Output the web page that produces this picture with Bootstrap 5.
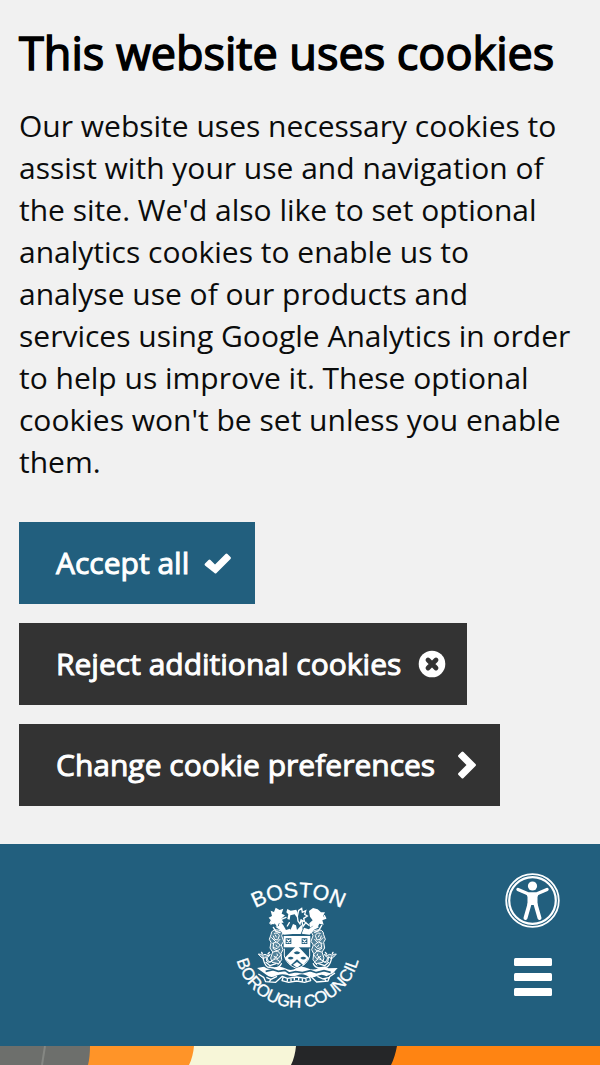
<!DOCTYPE html>
<html lang="en">
<head>
<meta charset="utf-8">
<meta name="viewport" content="width=device-width, initial-scale=1">
<title>Boston Borough Council</title>
<link rel="stylesheet" href="https://cdn.jsdelivr.net/npm/bootstrap@5.3.0/dist/css/bootstrap.min.css">
<style>
  body { font-family: "Open Sans", "Noto Sans", sans-serif; font-size: 30px; line-height: 42px; color: #0b0c0c; background: #f1f1f1; }
  .cookie-banner { padding: 20px 19px 38px; }
  .cookie-title { font-size: 45px; line-height: 66px; font-weight: 400; color: #000; margin-bottom: 19px; -webkit-text-stroke: 1.5px currentColor; }
  .cookie-copy { margin-bottom: 39px; }
  .cookie-btn { --bs-btn-color: #fff; --bs-btn-hover-color: #fff; --bs-btn-bg: #333; --bs-btn-hover-bg: #111; --bs-btn-active-color: #fff; --bs-btn-active-bg: #111;
    --bs-btn-font-size: 30px; --bs-btn-line-height: 42px; --bs-btn-padding-x: 37px; --bs-btn-padding-y: 20px; --bs-btn-border-width: 0; --bs-btn-border-radius: 0; -webkit-text-stroke: 1px currentColor; }
  .cookie-btn svg { stroke: none; flex: none; }
  .accept { --bs-btn-bg: #225f7e; --bs-btn-hover-bg: #184a63; gap: 15px; padding-right: 23px; }
  .reject { gap: 17px; padding-right: 21px; }
  .change { gap: 22px; padding-right: 23px; }
  .btn-stack { gap: 19px; }
  .site-header { background: #225f7e; padding: 26px 40px 26px 35px; }
  .header-side { flex: 1 1 0; }
  .tools { gap: 30px; padding-top: 3px; }
  .tool-btn { --bs-btn-padding-x: 0; --bs-btn-padding-y: 0; --bs-btn-border-width: 0; line-height: 0; }
  .crest-text { font-family: "Liberation Sans", sans-serif; fill: #fff; stroke: #fff; stroke-width: 1; }
  .hero { height: 19px; }
</style>
</head>
<body>
<section class="cookie-banner" aria-labelledby="cookie-title">
  <h2 class="cookie-title" id="cookie-title">This website uses cookies</h2>
  <p class="cookie-copy">Our website uses necessary cookies to assist with your use and navigation of the site. We'd also like to set optional analytics cookies to enable us to analyse use of our products and services using Google Analytics in order to help us improve it. These optional cookies won't be set unless you enable them.</p>
  <div class="btn-stack d-flex flex-column align-items-start">
    <button type="button" class="btn cookie-btn accept d-flex align-items-center">Accept all
      <svg width="28" height="22" viewBox="0 0 28 22" aria-hidden="true"><path fill="#fff" d="M1 11.500 4.500 8q1-1 2 0l4.500 4.500L21.500 2q1-1 2 0L26.500 5q1 1 0 2L12.500 21q-1 1-2 0L1 13.500q-1-1 0-2z"/></svg>
    </button>
    <button type="button" class="btn cookie-btn reject d-flex align-items-center">Reject additional cookies
      <svg width="28" height="28" viewBox="0 0 28 28" aria-hidden="true"><circle cx="14" cy="14" r="13.300" fill="#fff"/><path d="m10 10 8 8m0-8-8 8" stroke="#333" stroke-width="4.800" stroke-linecap="round"/></svg>
    </button>
    <button type="button" class="btn cookie-btn change d-flex align-items-center">Change cookie preferences
      <svg width="20" height="28" viewBox="0 0 20 28" aria-hidden="true"><path fill="#fff" d="M1.500 4 4.500 1q1-1 2 0l12 12q1 1 0 2l-12 12q-1 1-2 0l-3-3q-1-1 0-2l8-8-8-8q-1-1 0-2z"/></svg>
    </button>
  </div>
</section>

<header class="site-header d-flex align-items-start">
  <div class="header-side"></div>
  <a href="#" class="d-block lh-1" aria-label="Boston Borough Council home">
    <svg class="d-block" width="155" height="150" viewBox="0 0 465 450" aria-hidden="true">
      <defs>
        <path id="arc-top" d="M58 148A270 270 0 0 1 412 148"/>
        <path id="arc-bottom" d="M44 224A189 189 0 0 0 422 224"/>
      </defs>
      <text class="crest-text" font-size="64" text-anchor="middle"><textPath href="#arc-top" startOffset="50%">BOSTON</textPath></text>
      <text class="crest-text" font-size="50" text-anchor="middle"><textPath href="#arc-bottom" startOffset="50%">BOROUGH COUNCIL</textPath></text>
      <!-- helm, sheep and mantling -->
      <g fill="#fff">
        <path d="M152 122l10 4 5-13 12 7 11-4-5 15 10 5-11 10 7 12-14 1-5 13-8-12-13 5 3-13-8-9 10-5z"/>
        <path d="M267 123l12-9 14 4 10 9 12 0-6 11 10 8-12 5 4 13-13-3-7 14-9-10-12 8-2-13 10-9-8-11z"/>
        <path d="M202 117l10 5 17-3 4 10-3 13-6-9-13 3-2 13-7-2 3-14-6-6z"/>
        <path d="M180 154l10 12 8 14 12-4 8 16-27 2-11-14-14-10 10-2zM286 152l-8 17-12 9-14-5-7 18 24 3 12-14 17-9-11-4z"/>
        <path d="M205 192l8-16 6-14 9 4 3 14 14-16 3 14-6 14z"/>
      </g>
      <g fill="none" stroke="#fff" stroke-width="4" stroke-linecap="round">
        <path d="M232 139l4-18 9-6 2 12 10-5-3 11 8 5-11 7 3 10-11-5-3 12-6-9zM245 150l4 19 9-12M184 148l14-6M208 158l-6 10M267 166l-10-8M155 150l-5 9 12 2M313 137l4 8M160 172l8 12 12 4M305 166l-9 16-12 5"/>
      </g>
      <!-- shield -->
      <path d="M191 198h80v34h-80z" fill="#fff"/>
      <path d="M231 226l36 38-17 22-19-18-19 18-18-22z" fill="#fff"/>
      <path d="M193 236v22q6 26 38 38 32-12 38-38v-22" fill="none" stroke="#fff" stroke-width="3"/>
      <path d="M197 205h17v17h-17zM245 205h17v17h-17z" fill="#225f7e"/>
      <path d="M200 208l11 11m0-11-11 11M248 208l11 11m0-11-11 11" stroke="#fff" stroke-width="3.500"/>
      <path d="M221 248q10-9 20 0-10 9-20 0zM203 264q9-8 18 0-9 9-18 0zM241 264q9-8 18 0-9 9-18 0z" fill="#225f7e"/>
      <path d="M219 284l12-8 12 8-12 9z" fill="#fff"/>
      <!-- mermaid supporters, mirrored about the shield -->
      <g id="supporter" fill="none" stroke="#fff" stroke-width="3" stroke-linecap="round" stroke-linejoin="round">
        <path fill="#fff" fill-opacity=".22" d="M174 180q-20-4-21 14l-5 14 5 9-3 17 8 12-6 18 4 13 20 4 9-12-2-18 6-12-5-14 7-11-6-17 5-11z"/>
        <path d="M163 190q11-4 15 7l-5 13-9-2-4-10M158 220l11-4 12 9-10 11-12-4 2-12M160 246l12-4 11 12-9 12-12-7M155 272l13-6 13 10-8 9M155 203l12 12M180 208l-10 11M179 238l-9 6M159 235l12 8M162 266l8-8M166 195l3 6M168 225l3 5M171 252l2 5"/>
        <path fill="#fff" fill-opacity=".3" d="M157 272q-8 10-17 1l-2-13q-7 10-15 1l-8-9q7 0 12 4l8-3 9 4 7-4q-3 8-10 9l3 10q5 7 12 1z"/>
        <path d="M129 261q2 21 14 30l21 3q15-1 20-13M127 252l-2-5M144 252l4-5M138 277l12 10 18-6" stroke-width="4"/>
      </g>
      <use href="#supporter" transform="matrix(-1 0 0 1 464 0)"/>
      <!-- waves and motto ribbon -->
      <path d="M111 294l21-4q15 11 31 4 16-8 32 1 18 10 34 0 16-9 34 0 17 8 33-1 16-8 29 1l28-1-14 16-20 9q-14-10-29 0-16 8-32-3-14-6-26 0-15 6-30-1-18-6-34 2-15 8-27-1z" fill="#fff"/>
      <path d="M137 304l22-5 16 5 20-3 12 8 20-4 20 3 24-6 18 6 23-6 20 5" stroke="#225f7e" stroke-width="5" fill="none"/>
      <path d="M115 312l16 10 6 13 30 2 20-18 15 6 28-4 26 4 16-6 18 17 34-3 5-13 16-11M139 322l14 6 18-9M292 319l17 8 20-5M190 320l-4 12 20 5 24-4 24 4 18-5-4-13M202 327v7M213 326v8M223 324v7M236 324v7M247 326v8M258 327v7M153 328l-5 7M314 327l5 7" fill="none" stroke="#fff" stroke-width="4" stroke-linejoin="round"/>
    </svg>
  </a>
  <div class="header-side d-flex justify-content-end">
    <div class="tools d-flex flex-column align-items-center">
      <button type="button" class="btn tool-btn" aria-label="Accessibility tools">
        <svg width="55" height="55" viewBox="0 0 55 55" aria-hidden="true">
          <circle cx="27.500" cy="27.500" r="26.300" fill="none" stroke="#fff" stroke-width="1.800"/>
          <circle cx="27.500" cy="27.500" r="23.300" fill="none" stroke="#fff" stroke-width="2.200"/>
          <circle cx="27.500" cy="13" r="4.600" fill="#fff"/>
          <path d="M13 16.500l10.500 4.500h8L42 16.500" stroke="#fff" stroke-width="3.400" stroke-linecap="round" stroke-linejoin="round" fill="none"/>
          <path d="M24.500 31l-4 14M30.500 31l4 14" stroke="#fff" stroke-width="4" stroke-linecap="round" fill="none"/>
          <path d="M21 20h13l-1.500 4v8h-10v-8z" fill="#fff"/>
        </svg>
      </button>
      <button type="button" class="btn tool-btn" aria-label="Menu">
        <svg width="38" height="38" viewBox="0 0 38 38" fill="#fff" aria-hidden="true"><rect width="38" height="8" rx="1.500"/><rect y="15" width="38" height="8" rx="1.500"/><rect y="30" width="38" height="8" rx="1.500"/></svg>
      </button>
    </div>
  </div>
</header>

<main>
  <svg class="hero d-block w-100" viewBox="0 0 600 19" preserveAspectRatio="none" aria-hidden="true">
    <path fill="#6d6f6c" d="M0 0h90v19H0z"/><path d="M45 0l-3 19" stroke="#858783" stroke-width="2"/>
    <path fill="#ff9428" d="M90 0h104v19H88q2-8 2-19z"/>
    <path fill="#f7f6d8" d="M194 0h102v19H189q4-8 5-19z"/>
    <path fill="#252628" d="M296 0h101v19H291q4-8 5-19z"/>
    <path fill="#ff8412" d="M397 0h203v19H391q4-8 6-19z"/>
  </svg>
</main>
<script src="https://cdn.jsdelivr.net/npm/bootstrap@5.3.0/dist/js/bootstrap.bundle.min.js"></script>
</body>
</html>
